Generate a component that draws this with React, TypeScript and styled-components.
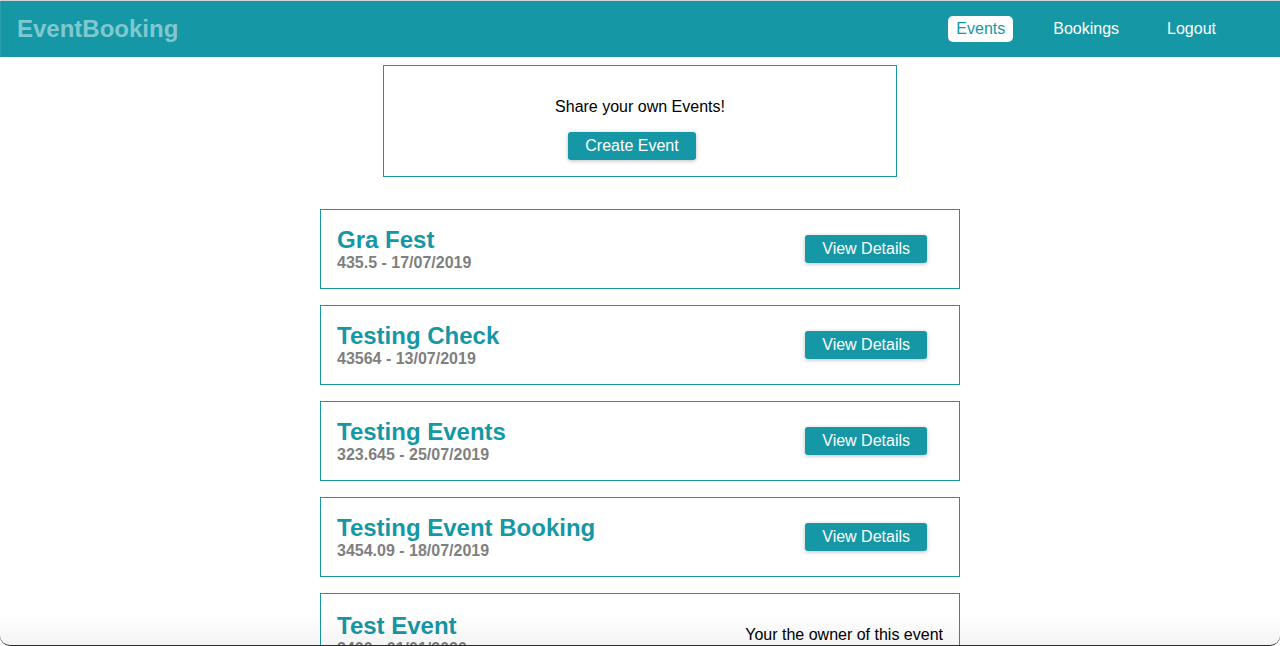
import React from "react";
import styled, { createGlobalStyle } from "styled-components";

const TEAL = "#1697a6";

const GlobalStyle = createGlobalStyle`
  html, body { margin: 0; padding: 0; background: #fff; }
  body {
    font-family: "Liberation Sans", Arial, sans-serif;
    border-top: 1px solid #d2d2d2;
    overflow: hidden;
  }
  * { box-sizing: border-box; }
`;

const Header = styled.header`
  height: 56px;
  background: ${TEAL};
  display: flex;
  align-items: center;
  justify-content: space-between;
  padding: 0 56px 0 16px;
  border-left: 1px solid #2aa0ad;
`;

const Logo = styled.h1`
  margin: 0;
  font-size: 24px;
  font-weight: bold;
  color: #80c8d0;
`;

const NavList = styled.ul`
  display: flex;
  list-style: none;
  margin: 0;
  padding: 0;
  gap: 32px;
`;

const NavLink = styled.a<{ $active?: boolean }>`
  display: block;
  padding: 4px 8px;
  font-size: 16px;
  line-height: 18px;
  border-radius: 5px;
  text-decoration: none;
  color: ${(p) => (p.$active ? TEAL : "#fff")};
  background: ${(p) => (p.$active ? "#fff" : "transparent")};
`;

const Main = styled.main`
  padding-top: 8px;
`;

const ControlBox = styled.div`
  width: 514px;
  margin: 0 auto;
  border: 1px solid ${TEAL};
  padding: 16px;
  text-align: center;
`;

const ControlText = styled.p`
  margin: 16px 0;
  font-size: 16px;
  line-height: 18px;
  color: #000;
`;

const Button = styled.button<{ $mr?: number }>`
  font-family: "Liberation Sans", Arial, sans-serif;
  font-size: 16px;
  line-height: 18px;
  padding: 5px 17px;
  border: none;
  border-radius: 3px;
  background: ${TEAL};
  color: #fff;
  box-shadow: 0 1px 4px rgba(0, 0, 0, 0.26);
  cursor: pointer;
  margin-right: ${(p) => p.$mr ?? 0}px;
`;

const List = styled.ul`
  width: 640px;
  margin: 32px auto 0;
  padding: 0;
  list-style: none;
`;

const Item = styled.li`
  margin: 16px 0;
  padding: 16px;
  border: 1px solid ${TEAL};
  display: flex;
  justify-content: space-between;
  align-items: center;
`;

const Title = styled.h1`
  margin: 0;
  font-size: 24px;
  line-height: 28px;
  font-weight: bold;
  color: ${TEAL};
`;

const Sub = styled.h2`
  margin: 0;
  font-size: 16px;
  line-height: 18px;
  font-weight: bold;
  color: #7f7f7f;
`;

const OwnerText = styled.p`
  margin: 16px 0;
  font-size: 16px;
  line-height: 18px;
  color: #000;
`;

const BottomShade = styled.div`
  position: fixed;
  left: 0;
  right: 0;
  bottom: 0;
  height: 32px;
  background: linear-gradient(to bottom, rgba(0, 0, 0, 0), rgba(0, 0, 0, 0.045));
  border-bottom: 1px solid #2b2b2b;
  border-radius: 0 0 10px 10px;
  pointer-events: none;
`;

const events = [
  { title: "Gra Fest", sub: "435.5 - 17/07/2019", owner: false },
  { title: "Testing Check", sub: "43564 - 13/07/2019", owner: false },
  { title: "Testing Events", sub: "323.645 - 25/07/2019", owner: false },
  { title: "Testing Event Booking", sub: "3454.09 - 18/07/2019", owner: false },
  { title: "Test Event", sub: "3400 - 01/01/2020", owner: true },
];

export default function App() {
  return (
    <>
      <GlobalStyle />
      <Header>
        <Logo>EventBooking</Logo>
        <nav>
          <NavList>
            <li><NavLink $active href="#">Events</NavLink></li>
            <li><NavLink href="#">Bookings</NavLink></li>
            <li><NavLink href="#">Logout</NavLink></li>
          </NavList>
        </nav>
      </Header>
      <Main>
        <ControlBox>
          <ControlText>Share your own Events!</ControlText>
          <Button $mr={16}>Create Event</Button>
        </ControlBox>
        <List>
          {events.map((e) => (
            <Item key={e.title}>
              <div>
                <Title>{e.title}</Title>
                <Sub>{e.sub}</Sub>
              </div>
              {e.owner ? (
                <OwnerText>Your the owner of this event</OwnerText>
              ) : (
                <Button $mr={16}>View Details</Button>
              )}
            </Item>
          ))}
        </List>
      </Main>
      <BottomShade />
    </>
  );
}
